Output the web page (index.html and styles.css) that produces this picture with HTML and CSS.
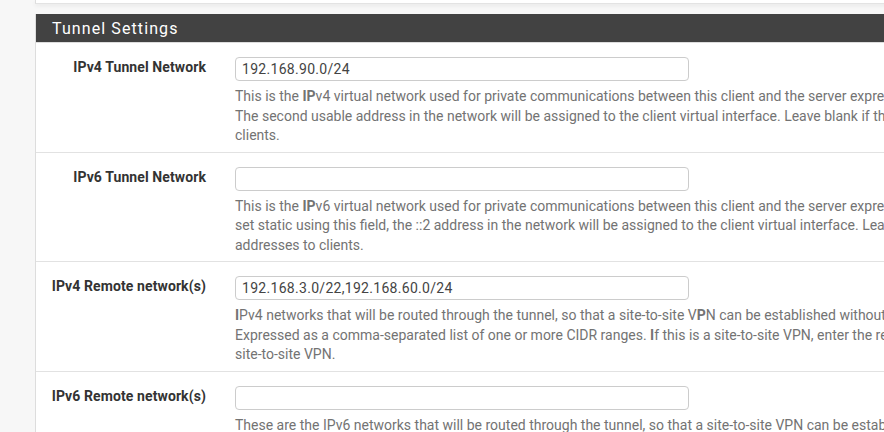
FILE: index.html
```html
<!DOCTYPE html>
<html>
<head>
<meta charset="utf-8">
<link rel="stylesheet" href="styles.css">
</head>
<body>
<div class="page">
  <div class="prev-panel"></div>
  <div class="panel">
    <div class="panel-heading">Tunnel Settings</div>
    <div class="row">
      <div class="label">IPv4 Tunnel Network</div>
      <div class="control">
        <input class="input" type="text" value="192.168.90.0/24">
        <div class="help">This is the <b>IP</b>v4 virtual network used for private communications between this client and the server expressed using CIDR notation (e.g. 10.0.8.0/24).<br>The second usable address in the network will be assigned to the client virtual interface. Leave blank if the server is capable of providing addresses to<br>clients.</div>
      </div>
    </div>
    <div class="row">
      <div class="label">IPv6 Tunnel Network</div>
      <div class="control">
        <input class="input" type="text" value="">
        <div class="help">This is the <b>IP</b>v6 virtual network used for private communications between this client and the server expressed using prefix notation (e.g. fd00::/64). When<br>set static using this field, the ::2 address in the network will be assigned to the client virtual interface. Leave blank if the server is capable of providing<br>addresses to clients.</div>
      </div>
    </div>
    <div class="row">
      <div class="label">IPv4 Remote network(s)</div>
      <div class="control">
        <input class="input" type="text" value="192.168.3.0/22,192.168.60.0/24">
        <div class="help"><b>I</b>Pv4 networks that will be routed through the tunnel, so that a site-to-site V<b>P</b>N can be established without manually changing the routing tables.<br>Expressed as a comma-separated list of one or more CIDR ranges. <b>I</b>f this is a site-to-site VPN, enter the remote LAN/s here. May be left blank for non<br>site-to-site VPN.</div>
      </div>
    </div>
    <div class="row">
      <div class="label">IPv6 Remote network(s)</div>
      <div class="control">
        <input class="input" type="text" value="">
        <div class="help">These are the IPv6 networks that will be routed through the tunnel, so that a site-to-site VPN can be established without manually changing the routing tables.<br>Expressed as a comma-separated list of one or more IP/PREFIX. If this is a site-to-site VPN, enter the remote LAN/s here. May be left blank for non<br>site-to-site VPN.</div>
      </div>
    </div>
  </div>
</div>
</body>
</html>
```
FILE: styles.css
```css
html, body {
  margin: 0;
  padding: 0;
  background: #f7f7f7;
  overflow: hidden;
  font-family: Roboto, "Liberation Sans", sans-serif;
}
.page {
  padding-left: 35px;
  width: 1500px;
}
.prev-panel {
  height: 3px;
  background: #fff;
  border-left: 1px solid #ddd;
  border-bottom: 1px solid #e3e3e3;
  box-shadow: 0 2px 4px rgba(0,0,0,0.06);
  margin-bottom: 10px;
}
.panel {
  background: #fff;
  border-left: 1px solid #ddd;
}
.panel-heading {
  background: #424242;
  color: #fff;
  height: 28px;
  line-height: 29px;
  padding-left: 16px;
  font-size: 16px;
  letter-spacing: 1.1px;
  border-bottom: 1px solid #ddd;
}
.row {
  display: grid;
  grid-template-columns: 184px 1fr;
  border-bottom: 1px solid #e2e2e2;
  padding-bottom: 6px;
}
.label {
  text-align: right;
  padding: 14px 14px 0 0;
  line-height: 20px;
  font-size: 14px;
  font-weight: bold;
  letter-spacing: 0.1px;
  color: #333;
}
.control {
  padding: 14px 0 0 15px;
}
.input {
  display: block;
  box-sizing: border-box;
  width: 454px;
  height: 24px;
  margin: 0;
  border: 1px solid #ccc;
  border-radius: 4px;
  padding: 0 6px;
  font-family: Roboto, "Liberation Sans", sans-serif;
  font-size: 14px;
  letter-spacing: 0.3px;
  color: #444;
  background: #fff;
}
.help {
  margin-top: 6px;
  width: 1200px;
  font-size: 14px;
  line-height: 19.5px;
  color: #737373;
}
.help b {
  font-weight: bold;
}
```
